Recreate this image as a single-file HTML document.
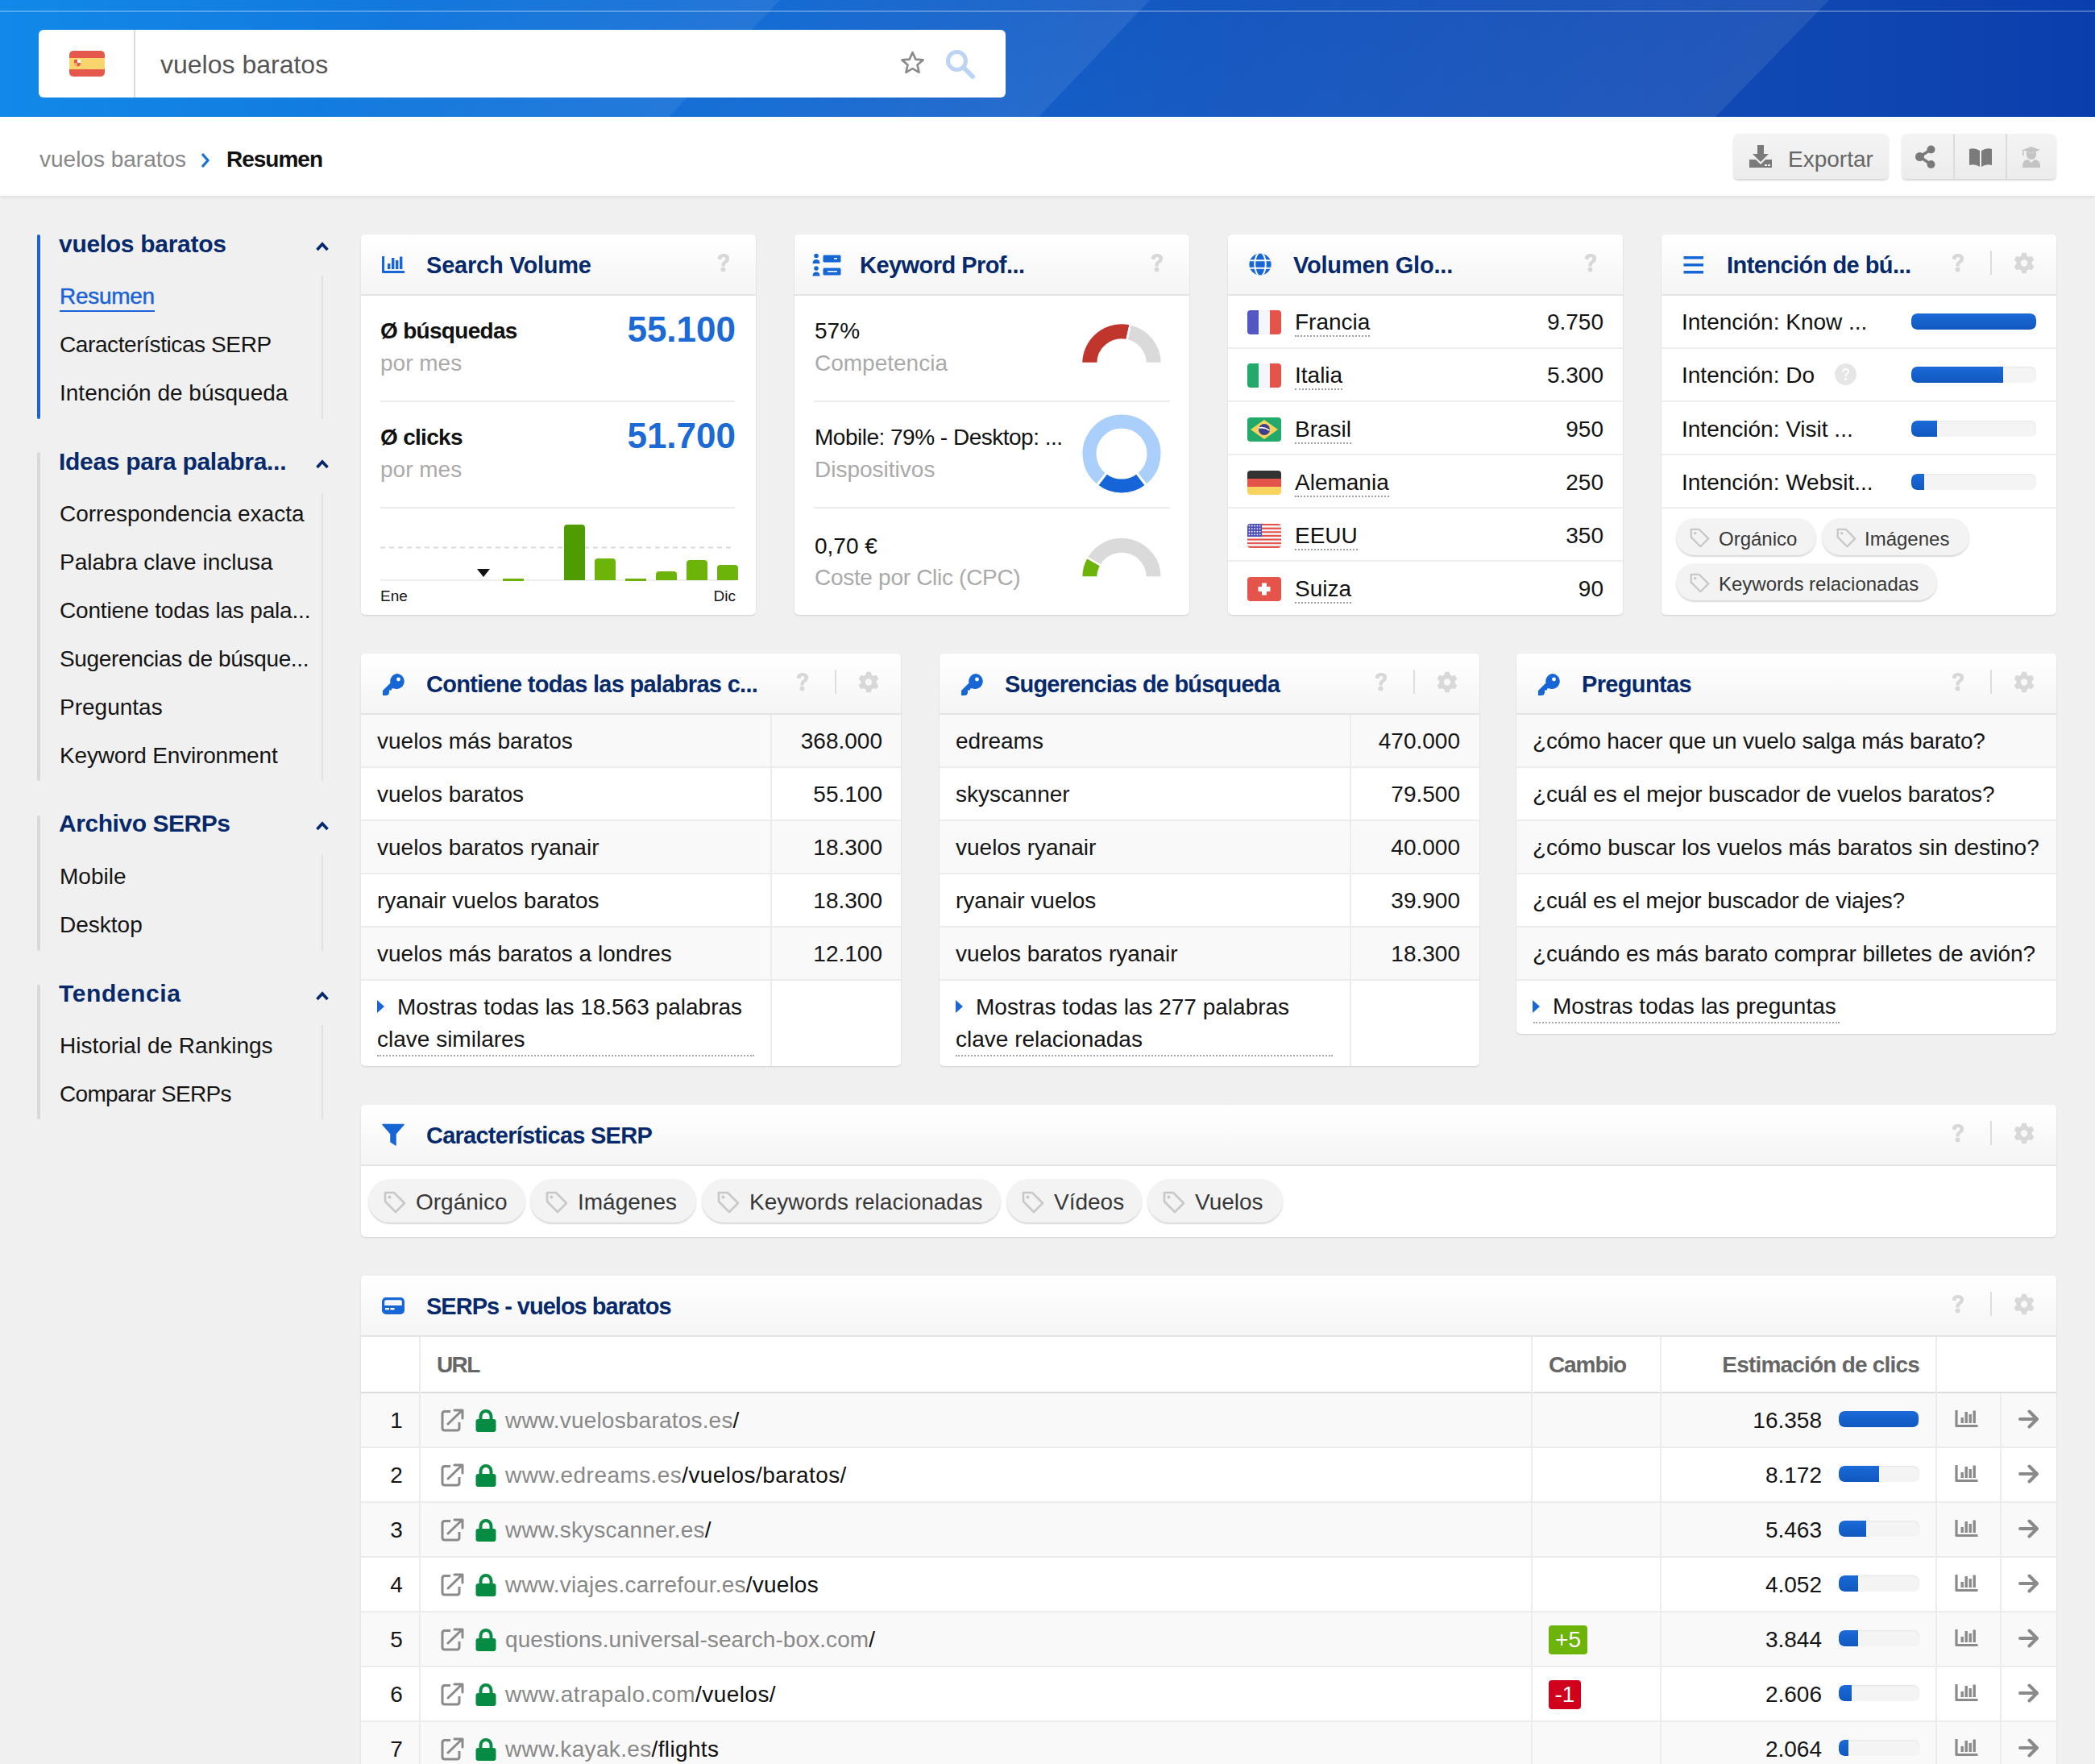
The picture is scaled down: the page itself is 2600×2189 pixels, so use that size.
<!DOCTYPE html><html><head><meta charset="utf-8"><style>
*{margin:0;padding:0;box-sizing:border-box}
html,body{width:2600px;height:2189px;overflow:hidden;background:#f0f0f0;font-family:"Liberation Sans", sans-serif;}
.t{position:absolute;white-space:nowrap}
.abs{position:absolute}
.card{position:absolute;background:#fff;border-radius:5px;box-shadow:0 1px 2px rgba(0,0,0,.13),0 0 1px rgba(0,0,0,.08);overflow:hidden}
.ch{position:absolute;left:0;top:0;right:0;height:76px;background:linear-gradient(#fff,#f5f5f5);border-bottom:2px solid #e4e4e4}
.pill{position:absolute;background:#f3f3f3;border-radius:30px;box-shadow:0 2px 2px rgba(0,0,0,.16)}
</style></head><body>
<div class="abs" style="left:0;top:0;width:2600px;height:145px;background:linear-gradient(90deg,#1189e9 0px,#1378dd 500px,#156cd4 950px,#1458c1 1450px,#0f46b1 2300px,#0b3ead 2600px);overflow:hidden">
<svg class="abs" style="left:0;top:0" width="2600" height="145">
<defs>
<linearGradient id="g1" gradientUnits="userSpaceOnUse" x1="520" y1="0" x2="744" y2="224"><stop offset="0" stop-color="#fff" stop-opacity="0"/><stop offset="1" stop-color="#fff" stop-opacity="0.07"/></linearGradient>
<linearGradient id="g2" gradientUnits="userSpaceOnUse" x1="968" y1="0" x2="1197" y2="229"><stop offset="0" stop-color="#fff" stop-opacity="0"/><stop offset="1" stop-color="#fff" stop-opacity="0.08"/></linearGradient>
<linearGradient id="g3" gradientUnits="userSpaceOnUse" x1="1427" y1="0" x2="1848" y2="421"><stop offset="0" stop-color="#fff" stop-opacity="0"/><stop offset="1" stop-color="#fff" stop-opacity="0.085"/></linearGradient>
</defs>
<polygon points="0,0 968,0 830,145 0,145" fill="url(#g1)"/>
<polygon points="968,0 1427,0 1289,145 830,145" fill="url(#g2)"/>
<polygon points="1427,0 2270,0 2129,145 1289,145" fill="url(#g3)"/>
</svg>
<div class="abs" style="left:0;top:13px;width:2600px;height:2px;background:rgba(255,255,255,.28)"></div>
</div>
<div class="abs" style="left:48px;top:37px;width:1200px;height:84px;background:#fff;border-radius:6px"></div>
<div class="abs" style="left:166px;top:37px;width:2px;height:84px;background:#dcdcdc"></div>
<svg class="abs" style="left:86px;top:63px" width="44" height="32" viewBox="0 0 44 32">
<defs><clipPath id="fr"><rect width="44" height="32" rx="5"/></clipPath></defs>
<g clip-path="url(#fr)"><rect width="44" height="32" fill="#e5594c"/><rect y="9" width="44" height="14" fill="#fad46c"/>
<rect x="6" y="11" width="4" height="4" fill="#e5594c"/><rect x="10" y="11" width="4" height="4" fill="#fff"/>
<path d="M6 15h4v4.5c-2.5 0-4-1.5-4-4.5z" fill="#f0a460"/><path d="M10 15h4c0 3-1.5 4.5-4 4.5z" fill="#e5594c"/></g></svg>
<div class="t " style="left:199px;top:63.9px;font-size:32px;line-height:32px;color:#555;font-weight:normal;">vuelos baratos</div>
<svg class="abs" style="left:1116px;top:62px" width="33" height="32" viewBox="0 0 33 32"><path d="M16.5 3 L20.3 11.6 L29.6 12.4 L22.5 18.6 L24.6 27.8 L16.5 23 L8.4 27.8 L10.5 18.6 L3.4 12.4 L12.7 11.6 Z" fill="none" stroke="#8a8a8a" stroke-width="2.6" stroke-linejoin="round"/></svg>
<svg class="abs" style="left:1172px;top:60px" width="40" height="40" viewBox="0 0 40 40"><circle cx="15.5" cy="15.5" r="11" fill="none" stroke="#bcd3f4" stroke-width="5"/><line x1="24" y1="24" x2="35" y2="35" stroke="#bcd3f4" stroke-width="6" stroke-linecap="round"/></svg>
<div class="abs" style="left:0;top:145px;width:2600px;height:98px;background:#fff;box-shadow:0 2px 4px rgba(0,0,0,.07)"></div>
<div class="t " style="left:49px;top:184.3px;font-size:28px;line-height:28px;color:#888;font-weight:normal;">vuelos baratos</div>
<svg class="abs" style="left:248px;top:188px" width="14" height="22" viewBox="0 0 14 22"><path d="M3 3 L10 11 L3 19" fill="none" stroke="#1a74d2" stroke-width="3.2"/></svg>
<div class="t " style="left:281px;top:184.3px;font-size:28px;line-height:28px;color:#111;font-weight:bold;letter-spacing:-1px">Resumen</div>
<div class="abs" style="left:2151px;top:166px;width:193px;height:56px;border-radius:6px;background:linear-gradient(#f4f4f4,#ececec);box-shadow:0 2px 2px rgba(0,0,0,.16)"></div>
<svg class="abs" style="left:2170px;top:180px" width="32" height="30" viewBox="0 0 32 30"><rect x="11" y="0" width="8" height="12" fill="#7a7a7a"/><path d="M5 11 L25 11 L15 21 Z" fill="#7a7a7a"/><path d="M1 18 h8 l6 6 l6 -6 h8 v10 h-28 z" fill="#7a7a7a"/><rect x="20" y="24" width="3" height="2" fill="#f0f0f0"/><rect x="24" y="24" width="3" height="2" fill="#f0f0f0"/></svg>
<div class="t " style="left:2219px;top:184.3px;font-size:28px;line-height:28px;color:#666;font-weight:normal;">Exportar</div>
<div class="abs" style="left:2360px;top:166px;width:192px;height:56px;border-radius:6px;background:linear-gradient(#f4f4f4,#ececec);box-shadow:0 2px 2px rgba(0,0,0,.16)"></div>
<div class="abs" style="left:2424px;top:166px;width:2px;height:56px;background:#dcdcdc"></div>
<div class="abs" style="left:2489px;top:166px;width:2px;height:56px;background:#dcdcdc"></div>
<svg class="abs" style="left:2376px;top:180px" width="32" height="30" viewBox="0 0 32 30"><circle cx="20.5" cy="5.5" r="5" fill="#7a7a7a"/><circle cx="6.5" cy="14.5" r="5.5" fill="#7a7a7a"/><circle cx="20.5" cy="24" r="5" fill="#7a7a7a"/><path d="M6.5 14.5 L20.5 5.5 M6.5 14.5 L20.5 24" stroke="#7a7a7a" stroke-width="3.5"/></svg>
<svg class="abs" style="left:2443px;top:184px" width="30" height="24" viewBox="0 0 30 24"><path d="M1 1 Q8 -1 14 3 V23 Q8 19 1 21 Z" fill="#7a7a7a"/><path d="M29 1 Q22 -1 16 3 V23 Q22 19 29 21 Z" fill="#7a7a7a"/></svg>
<svg class="abs" style="left:2509px;top:182px" width="24" height="26" viewBox="0 0 24 26"><path d="M1 4 L12 0 L23 4 L12 8 Z" fill="#c4c4c4"/><rect x="1" y="4" width="1.6" height="7" fill="#c4c4c4"/><path d="M6 6 v4 a6 6 0 0 0 12 0 v-4 l-6 2.2 z" fill="#c4c4c4"/><path d="M1 26 v-3 q0 -6 7 -7 l4 4 l4 -4 q7 1 7 7 v3 z" fill="#c4c4c4"/></svg>
<div class="abs" style="left:46px;top:291px;width:4px;height:229px;border-radius:2px;background:#1a62d6"></div>
<div class="t " style="left:73px;top:287.6px;font-size:30px;line-height:30px;color:#06296b;font-weight:bold;letter-spacing:-0.3px">vuelos baratos</div>
<svg class="abs" style="left:391px;top:299px" width="18" height="13" viewBox="0 0 18 13"><path d="M2.5 11 L9 4 L15.5 11" fill="none" stroke="#06296b" stroke-width="3.6"/></svg>
<div class="abs" style="left:399px;top:342px;width:2px;height:178px;background:#e0e0e0"></div>
<div class="t " style="left:74px;top:354.3px;font-size:28px;line-height:28px;color:#1a62d8;font-weight:normal;-webkit-text-stroke:0.45px #1a62d8;letter-spacing:-0.3px">Resumen</div>
<div class="abs" style="left:74px;top:385px;width:118px;height:2px;background:#1a62d8"></div>
<div class="t " style="left:74px;top:414.3px;font-size:28px;line-height:28px;color:#151515;font-weight:normal;letter-spacing:-0.4px">Características SERP</div>
<div class="t " style="left:74px;top:474.3px;font-size:28px;line-height:28px;color:#151515;font-weight:normal;letter-spacing:0px">Intención de búsqueda</div>
<div class="abs" style="left:46px;top:561px;width:4px;height:408px;border-radius:2px;background:#d9d9d9"></div>
<div class="t " style="left:73px;top:557.6px;font-size:30px;line-height:30px;color:#06296b;font-weight:bold;letter-spacing:-0.3px">Ideas para palabra...</div>
<svg class="abs" style="left:391px;top:569px" width="18" height="13" viewBox="0 0 18 13"><path d="M2.5 11 L9 4 L15.5 11" fill="none" stroke="#06296b" stroke-width="3.6"/></svg>
<div class="abs" style="left:399px;top:612px;width:2px;height:357px;background:#e0e0e0"></div>
<div class="t " style="left:74px;top:624.3px;font-size:28px;line-height:28px;color:#151515;font-weight:normal;letter-spacing:0px">Correspondencia exacta</div>
<div class="t " style="left:74px;top:684.3px;font-size:28px;line-height:28px;color:#151515;font-weight:normal;letter-spacing:0px">Palabra clave inclusa</div>
<div class="t " style="left:74px;top:744.3px;font-size:28px;line-height:28px;color:#151515;font-weight:normal;letter-spacing:-0.18px">Contiene todas las pala...</div>
<div class="t " style="left:74px;top:804.3px;font-size:28px;line-height:28px;color:#151515;font-weight:normal;letter-spacing:-0.35px">Sugerencias de búsque...</div>
<div class="t " style="left:74px;top:864.3px;font-size:28px;line-height:28px;color:#151515;font-weight:normal;letter-spacing:0px">Preguntas</div>
<div class="t " style="left:74px;top:924.3px;font-size:28px;line-height:28px;color:#151515;font-weight:normal;letter-spacing:-0.18px">Keyword Environment</div>
<div class="abs" style="left:46px;top:1012px;width:4px;height:168px;border-radius:2px;background:#d9d9d9"></div>
<div class="t " style="left:73px;top:1006.6px;font-size:30px;line-height:30px;color:#06296b;font-weight:bold;letter-spacing:-0.45px">Archivo SERPs</div>
<svg class="abs" style="left:391px;top:1018px" width="18" height="13" viewBox="0 0 18 13"><path d="M2.5 11 L9 4 L15.5 11" fill="none" stroke="#06296b" stroke-width="3.6"/></svg>
<div class="abs" style="left:399px;top:1061px;width:2px;height:119px;background:#e0e0e0"></div>
<div class="t " style="left:74px;top:1074.3px;font-size:28px;line-height:28px;color:#151515;font-weight:normal;letter-spacing:0px">Mobile</div>
<div class="t " style="left:74px;top:1134.3px;font-size:28px;line-height:28px;color:#151515;font-weight:normal;letter-spacing:0px">Desktop</div>
<div class="abs" style="left:46px;top:1222px;width:4px;height:167px;border-radius:2px;background:#d9d9d9"></div>
<div class="t " style="left:73px;top:1217.6px;font-size:30px;line-height:30px;color:#06296b;font-weight:bold;letter-spacing:0.6px">Tendencia</div>
<svg class="abs" style="left:391px;top:1229px" width="18" height="13" viewBox="0 0 18 13"><path d="M2.5 11 L9 4 L15.5 11" fill="none" stroke="#06296b" stroke-width="3.6"/></svg>
<div class="abs" style="left:399px;top:1272px;width:2px;height:117px;background:#e0e0e0"></div>
<div class="t " style="left:74px;top:1284.3px;font-size:28px;line-height:28px;color:#151515;font-weight:normal;letter-spacing:0px">Historial de Rankings</div>
<div class="t " style="left:74px;top:1344.3px;font-size:28px;line-height:28px;color:#151515;font-weight:normal;letter-spacing:-0.7px">Comparar SERPs</div>
<div class="card" style="left:448px;top:291px;width:490px;height:472px"><div class="ch"></div></div>
<div class="card" style="left:986px;top:291px;width:490px;height:472px"><div class="ch"></div></div>
<div class="card" style="left:1524px;top:291px;width:490px;height:472px"><div class="ch"></div></div>
<div class="card" style="left:2062px;top:291px;width:490px;height:472px"><div class="ch"></div></div>
<svg class="abs" style="left:474px;top:318px" width="28" height="21" viewBox="0 0 28 21"><path d="M1.5 0 V19.5 H28" fill="none" stroke="#1766d6" stroke-width="3.2" stroke-linejoin="round"/><rect x="7" y="9" width="3.4" height="7" fill="#1766d6"/><rect x="12" y="2" width="3.4" height="14" fill="#1766d6"/><rect x="17" y="5" width="3.4" height="11" fill="#1766d6"/><rect x="22" y="0.5" width="3.4" height="15.5" fill="#1766d6"/></svg>

<div class="t " style="left:529px;top:314.5px;font-size:29px;line-height:29px;color:#06296b;font-weight:bold;letter-spacing:-0.2px">Search Volume</div>
<svg class="abs" style="left:889px;top:314px" width="18" height="24" viewBox="0 0 18 24"><path d="M2.5 7 Q2.5 1.5 9 1.5 Q15.5 1.5 15.5 7 Q15.5 10.5 11.5 12.5 Q10 13.5 10 16 H7 Q7 12 9.5 10.5 Q12 9 12 7 Q12 4.5 9 4.5 Q6 4.5 6 7.5 Z" fill="#d8d8d8" stroke="#d8d8d8" stroke-width="1.2"/><circle cx="8.5" cy="20.5" r="3" fill="#d8d8d8"/></svg>
<div class="t " style="left:472px;top:397.3px;font-size:28px;line-height:28px;color:#111;font-weight:bold;letter-spacing:-0.7px">Ø búsquedas</div>
<div class="t " style="left:472px;top:437.3px;font-size:28px;line-height:28px;color:#aaa;font-weight:normal;">por mes</div>
<div class="t " style="right:1687px;top:386.8px;font-size:44px;line-height:44px;color:#1b6ad6;font-weight:bold;">55.100</div>
<div class="abs" style="left:472px;top:497px;width:440px;height:2px;background:#ececec"></div>
<div class="t " style="left:472px;top:529.3px;font-size:28px;line-height:28px;color:#111;font-weight:bold;letter-spacing:-0.7px">Ø clicks</div>
<div class="t " style="left:472px;top:569.3px;font-size:28px;line-height:28px;color:#aaa;font-weight:normal;">por mes</div>
<div class="t " style="right:1687px;top:518.8px;font-size:44px;line-height:44px;color:#1b6ad6;font-weight:bold;">51.700</div>
<div class="abs" style="left:472px;top:629px;width:440px;height:2px;background:#ececec"></div>
<svg class="abs" style="left:472px;top:640px" width="450" height="90" viewBox="0 0 450 90"><line x1="0" y1="39.5" x2="440" y2="39.5" stroke="#d9d9d9" stroke-width="2" stroke-dasharray="6,5"/><rect x="0" y="79" width="440" height="2" fill="#eeeeee"/><rect x="152" y="78" width="26" height="3" fill="#6cb40a"/><path d="M228 80 V15 Q228 11 232 11 H250 Q254 11 254 15 V80 Z" fill="#4f9c02"/><path d="M266 80 V57 Q266 53 270 53 H288 Q292 53 292 57 V80 Z" fill="#6cb40a"/><rect x="304" y="78" width="26" height="3" fill="#6cb40a"/><path d="M342 80 V73 Q342 69 346 69 H364 Q368 69 368 73 V80 Z" fill="#6cb40a"/><path d="M380 80 V59 Q380 55 384 55 H402 Q406 55 406 59 V80 Z" fill="#6cb40a"/><path d="M418 80 V65 Q418 61 422 61 H440 Q444 61 444 65 V80 Z" fill="#6cb40a"/><path d="M120 66 L136 66 L128 76 Z" fill="#111"/></svg>
<div class="t " style="left:472px;top:729.9px;font-size:19px;line-height:19px;color:#151515;font-weight:normal;">Ene</div>
<div class="t " style="right:1687px;top:729.9px;font-size:19px;line-height:19px;color:#151515;font-weight:normal;">Dic</div>
<svg class="abs" style="left:1008px;top:314px" width="36" height="29" viewBox="0 0 36 29"><circle cx="5" cy="3.5" r="2.8" fill="#1766d6"/><path d="M0.5 13 Q0.5 8 5 8 Q9.5 8 9.5 13 Z" fill="#1766d6"/><circle cx="5" cy="19" r="2.8" fill="#1766d6"/><path d="M0.5 28.5 Q0.5 23.5 5 23.5 Q9.5 23.5 9.5 28.5 Z" fill="#1766d6"/><rect x="13.5" y="2.5" width="22" height="9" rx="1.5" fill="#1766d6"/><rect x="27" y="6" width="4" height="1.6" fill="#fff"/><rect x="13.5" y="18.5" width="22" height="9" rx="1.5" fill="#1766d6"/><rect x="19" y="22" width="12" height="1.6" fill="#fff"/></svg>

<div class="t " style="left:1067px;top:314.5px;font-size:29px;line-height:29px;color:#06296b;font-weight:bold;letter-spacing:-0.55px">Keyword Prof...</div>
<svg class="abs" style="left:1427px;top:314px" width="18" height="24" viewBox="0 0 18 24"><path d="M2.5 7 Q2.5 1.5 9 1.5 Q15.5 1.5 15.5 7 Q15.5 10.5 11.5 12.5 Q10 13.5 10 16 H7 Q7 12 9.5 10.5 Q12 9 12 7 Q12 4.5 9 4.5 Q6 4.5 6 7.5 Z" fill="#d8d8d8" stroke="#d8d8d8" stroke-width="1.2"/><circle cx="8.5" cy="20.5" r="3" fill="#d8d8d8"/></svg>
<div class="t " style="left:1011px;top:397.3px;font-size:28px;line-height:28px;color:#111;font-weight:normal;">57%</div>
<div class="t " style="left:1011px;top:437.3px;font-size:28px;line-height:28px;color:#aaa;font-weight:normal;">Competencia</div>
<div class="abs" style="left:1010px;top:497px;width:442px;height:2px;background:#ececec"></div>
<div class="t " style="left:1011px;top:529.3px;font-size:28px;line-height:28px;color:#111;font-weight:normal;letter-spacing:-0.5px">Mobile: 79% - Desktop: ...</div>
<div class="t " style="left:1011px;top:569.3px;font-size:28px;line-height:28px;color:#aaa;font-weight:normal;">Dispositivos</div>
<div class="abs" style="left:1010px;top:629px;width:442px;height:2px;background:#ececec"></div>
<div class="t " style="left:1011px;top:664.3px;font-size:28px;line-height:28px;color:#111;font-weight:normal;">0,70 €</div>
<div class="t " style="left:1011px;top:703.3px;font-size:28px;line-height:28px;color:#aaa;font-weight:normal;letter-spacing:-0.3px">Coste por Clic (CPC)</div>
<svg class="abs" style="left:1332px;top:390px" width="120" height="340" viewBox="1332 390 120 340"><path d="M1342.00 451.00 A50 50 0 0 1 1402.91 402.20 L1398.44 422.21 A29.5 29.5 0 0 0 1362.50 451.00 Z" fill="#c0362c" stroke="#fff" stroke-width="2.5"/><path d="M1402.91 402.20 A50 50 0 0 1 1442.00 451.00 L1421.50 451.00 A29.5 29.5 0 0 0 1398.44 422.21 Z" fill="#dadada" stroke="#fff" stroke-width="2.5"/><path d="M1422.65 602.51 A50 50 0 1 0 1361.35 602.51 L1373.61 586.70 A30 30 0 1 1 1410.39 586.70 Z" fill="#abcffb" stroke="#fff" stroke-width="3"/><path d="M1361.35 602.51 A50 50 0 0 0 1422.65 602.51 L1410.39 586.70 A30 30 0 0 1 1373.61 586.70 Z" fill="#1565d8" stroke="#fff" stroke-width="3"/><path d="M1342.00 716.50 A50 50 0 0 1 1348.70 691.50 L1366.45 701.75 A29.5 29.5 0 0 0 1362.50 716.50 Z" fill="#6cb40a" stroke="#fff" stroke-width="2.5"/><path d="M1348.70 691.50 A50 50 0 0 1 1442.00 716.50 L1421.50 716.50 A29.5 29.5 0 0 0 1366.45 701.75 Z" fill="#dadada" stroke="#fff" stroke-width="2.5"/></svg>
<svg class="abs" style="left:1550px;top:314px" width="28" height="28" viewBox="0 0 28 28"><defs><clipPath id="gc"><circle cx="14" cy="14" r="13.6"/></clipPath></defs><g clip-path="url(#gc)"><rect width="28" height="28" fill="#1766d6"/><path d="M0 9.2 H28 M0 18.8 H28" stroke="#fff" stroke-width="2"/><ellipse cx="14" cy="14" rx="6.8" ry="14.6" fill="none" stroke="#fff" stroke-width="2"/></g></svg>

<div class="t " style="left:1605px;top:314.5px;font-size:29px;line-height:29px;color:#06296b;font-weight:bold;letter-spacing:-0.2px">Volumen Glo...</div>
<svg class="abs" style="left:1965px;top:314px" width="18" height="24" viewBox="0 0 18 24"><path d="M2.5 7 Q2.5 1.5 9 1.5 Q15.5 1.5 15.5 7 Q15.5 10.5 11.5 12.5 Q10 13.5 10 16 H7 Q7 12 9.5 10.5 Q12 9 12 7 Q12 4.5 9 4.5 Q6 4.5 6 7.5 Z" fill="#d8d8d8" stroke="#d8d8d8" stroke-width="1.2"/><circle cx="8.5" cy="20.5" r="3" fill="#d8d8d8"/></svg>
<svg class="abs" style="left:1548px;top:385px" width="42" height="30" viewBox="0 0 42 30"><defs><clipPath id="f0"><rect width="42" height="30" rx="4"/></clipPath></defs><g clip-path="url(#f0)"><rect width="42" height="30" fill="#f3f6fb"/><rect width="14" height="30" fill="#5257c4"/><rect x="28" width="14" height="30" fill="#e5544b"/></g></svg>
<div class="t " style="left:1607px;top:386.3px;font-size:28px;line-height:28px;color:#111;font-weight:normal;border-bottom:2px dotted #a0a0a0;padding-bottom:2px">Francia</div>
<div class="t " style="right:610px;top:386.3px;font-size:28px;line-height:28px;color:#151515;font-weight:normal;">9.750</div>
<div class="abs" style="left:1524px;top:431px;width:490px;height:2px;background:#ededed"></div>
<svg class="abs" style="left:1548px;top:451px" width="42" height="30" viewBox="0 0 42 30"><defs><clipPath id="f1"><rect width="42" height="30" rx="4"/></clipPath></defs><g clip-path="url(#f1)"><rect width="42" height="30" fill="#f3f6fb"/><rect width="14" height="30" fill="#23a96a"/><rect x="28" width="14" height="30" fill="#e5544b"/></g></svg>
<div class="t " style="left:1607px;top:452.3px;font-size:28px;line-height:28px;color:#111;font-weight:normal;border-bottom:2px dotted #a0a0a0;padding-bottom:2px">Italia</div>
<div class="t " style="right:610px;top:452.3px;font-size:28px;line-height:28px;color:#151515;font-weight:normal;">5.300</div>
<div class="abs" style="left:1524px;top:497px;width:490px;height:2px;background:#ededed"></div>
<svg class="abs" style="left:1548px;top:518px" width="42" height="30" viewBox="0 0 42 30"><defs><clipPath id="f2"><rect width="42" height="30" rx="4"/></clipPath></defs><g clip-path="url(#f2)"><rect width="42" height="30" fill="#23a96a"/><path d="M21 3 L38 15 L21 27 L4 15 Z" fill="#f6d35b"/><circle cx="21" cy="15" r="7" fill="#3e3f8f"/><path d="M14.5 13 Q21 11.5 27.5 16" stroke="#fff" stroke-width="1.6" fill="none"/></g></svg>
<div class="t " style="left:1607px;top:519.3px;font-size:28px;line-height:28px;color:#111;font-weight:normal;border-bottom:2px dotted #a0a0a0;padding-bottom:2px">Brasil</div>
<div class="t " style="right:610px;top:519.3px;font-size:28px;line-height:28px;color:#151515;font-weight:normal;">950</div>
<div class="abs" style="left:1524px;top:563px;width:490px;height:2px;background:#ededed"></div>
<svg class="abs" style="left:1548px;top:584px" width="42" height="30" viewBox="0 0 42 30"><defs><clipPath id="f3"><rect width="42" height="30" rx="4"/></clipPath></defs><g clip-path="url(#f3)"><rect width="42" height="10" fill="#333"/><rect y="10" width="42" height="10" fill="#e5544b"/><rect y="20" width="42" height="10" fill="#f8d15e"/></g></svg>
<div class="t " style="left:1607px;top:585.3px;font-size:28px;line-height:28px;color:#111;font-weight:normal;border-bottom:2px dotted #a0a0a0;padding-bottom:2px">Alemania</div>
<div class="t " style="right:610px;top:585.3px;font-size:28px;line-height:28px;color:#151515;font-weight:normal;">250</div>
<div class="abs" style="left:1524px;top:629px;width:490px;height:2px;background:#ededed"></div>
<svg class="abs" style="left:1548px;top:650px" width="42" height="30" viewBox="0 0 42 30"><defs><clipPath id="f4"><rect width="42" height="30" rx="4"/></clipPath></defs><g clip-path="url(#f4)"><rect y="0.00" width="42" height="2.31" fill="#e5544b"/><rect y="2.31" width="42" height="2.31" fill="#f3f6fb"/><rect y="4.62" width="42" height="2.31" fill="#e5544b"/><rect y="6.92" width="42" height="2.31" fill="#f3f6fb"/><rect y="9.23" width="42" height="2.31" fill="#e5544b"/><rect y="11.54" width="42" height="2.31" fill="#f3f6fb"/><rect y="13.85" width="42" height="2.31" fill="#e5544b"/><rect y="16.15" width="42" height="2.31" fill="#f3f6fb"/><rect y="18.46" width="42" height="2.31" fill="#e5544b"/><rect y="20.77" width="42" height="2.31" fill="#f3f6fb"/><rect y="23.08" width="42" height="2.31" fill="#e5544b"/><rect y="25.38" width="42" height="2.31" fill="#f3f6fb"/><rect y="27.69" width="42" height="2.31" fill="#e5544b"/><rect width="18" height="16" fill="#4b4fb5"/><circle cx="2.5" cy="2.5" r="0.9" fill="#fff"/><circle cx="2.5" cy="6.1" r="0.9" fill="#fff"/><circle cx="2.5" cy="9.7" r="0.9" fill="#fff"/><circle cx="2.5" cy="13.3" r="0.9" fill="#fff"/><circle cx="5.8" cy="2.5" r="0.9" fill="#fff"/><circle cx="5.8" cy="6.1" r="0.9" fill="#fff"/><circle cx="5.8" cy="9.7" r="0.9" fill="#fff"/><circle cx="5.8" cy="13.3" r="0.9" fill="#fff"/><circle cx="9.1" cy="2.5" r="0.9" fill="#fff"/><circle cx="9.1" cy="6.1" r="0.9" fill="#fff"/><circle cx="9.1" cy="9.7" r="0.9" fill="#fff"/><circle cx="9.1" cy="13.3" r="0.9" fill="#fff"/><circle cx="12.4" cy="2.5" r="0.9" fill="#fff"/><circle cx="12.4" cy="6.1" r="0.9" fill="#fff"/><circle cx="12.4" cy="9.7" r="0.9" fill="#fff"/><circle cx="12.4" cy="13.3" r="0.9" fill="#fff"/><circle cx="15.7" cy="2.5" r="0.9" fill="#fff"/><circle cx="15.7" cy="6.1" r="0.9" fill="#fff"/><circle cx="15.7" cy="9.7" r="0.9" fill="#fff"/><circle cx="15.7" cy="13.3" r="0.9" fill="#fff"/></g></svg>
<div class="t " style="left:1607px;top:651.3px;font-size:28px;line-height:28px;color:#111;font-weight:normal;border-bottom:2px dotted #a0a0a0;padding-bottom:2px">EEUU</div>
<div class="t " style="right:610px;top:651.3px;font-size:28px;line-height:28px;color:#151515;font-weight:normal;">350</div>
<div class="abs" style="left:1524px;top:695px;width:490px;height:2px;background:#ededed"></div>
<svg class="abs" style="left:1548px;top:716px" width="42" height="30" viewBox="0 0 42 30"><defs><clipPath id="f5"><rect width="42" height="30" rx="4"/></clipPath></defs><g clip-path="url(#f5)"><rect width="42" height="30" fill="#e5544b"/><rect x="18" y="7.5" width="6" height="15" fill="#fff"/><rect x="13.5" y="12" width="15" height="6" fill="#fff"/></g></svg>
<div class="t " style="left:1607px;top:717.3px;font-size:28px;line-height:28px;color:#111;font-weight:normal;border-bottom:2px dotted #a0a0a0;padding-bottom:2px">Suiza</div>
<div class="t " style="right:610px;top:717.3px;font-size:28px;line-height:28px;color:#151515;font-weight:normal;">90</div>
<svg class="abs" style="left:2089px;top:318px" width="26" height="22" viewBox="0 0 26 22"><rect x="0.5" y="0" width="24.5" height="3.5" fill="#1766d6"/><rect x="0.5" y="9" width="24.5" height="3.5" fill="#1766d6"/><rect x="0.5" y="18" width="24.5" height="3.5" fill="#1766d6"/></svg>

<div class="t " style="left:2143px;top:314.5px;font-size:29px;line-height:29px;color:#06296b;font-weight:bold;letter-spacing:-0.55px">Intención de bú...</div>
<svg class="abs" style="left:2421px;top:314px" width="18" height="24" viewBox="0 0 18 24"><path d="M2.5 7 Q2.5 1.5 9 1.5 Q15.5 1.5 15.5 7 Q15.5 10.5 11.5 12.5 Q10 13.5 10 16 H7 Q7 12 9.5 10.5 Q12 9 12 7 Q12 4.5 9 4.5 Q6 4.5 6 7.5 Z" fill="#d8d8d8" stroke="#d8d8d8" stroke-width="1.2"/><circle cx="8.5" cy="20.5" r="3" fill="#d8d8d8"/></svg>
<div class="abs" style="left:2470px;top:311px;width:2px;height:30px;background:#dedede"></div>
<svg class="abs" style="left:2499px;top:313px" width="26" height="27" viewBox="0 0 26 27"><path d="M9.13 4.83 L10.42 0.76 L15.58 0.76 L16.87 4.83 L18.58 5.81 L22.74 4.89 L25.33 9.37 L22.45 12.52 L22.45 14.48 L25.33 17.63 L22.74 22.11 L18.58 21.19 L16.87 22.17 L15.58 26.24 L10.42 26.24 L9.13 22.17 L7.42 21.19 L3.26 22.11 L0.67 17.63 L3.55 14.48 L3.55 12.52 L0.67 9.37 L3.26 4.89 L7.42 5.81Z" fill="#d8d8d8"/><circle cx="13" cy="13.5" r="9.6" fill="#d8d8d8"/><circle cx="13" cy="13.5" r="4.2" fill="#f8f8f8"/></svg>
<div class="t " style="left:2087px;top:386.3px;font-size:28px;line-height:28px;color:#111;font-weight:normal;">Intención: Know ...</div>
<div class="abs" style="left:2372px;top:389px;width:155px;height:20px;border-radius:7px;background:#f4f4f4;box-shadow:inset 0 1px 2px rgba(0,0,0,.06);overflow:hidden"><div style="width:155px;height:20px;background:linear-gradient(#1a6ad8,#1158c0);border-radius:7px"></div></div>
<div class="abs" style="left:2062px;top:431px;width:490px;height:2px;background:#ededed"></div>
<div class="t " style="left:2087px;top:452.3px;font-size:28px;line-height:28px;color:#111;font-weight:normal;">Intención: Do</div>
<div class="abs" style="left:2372px;top:455px;width:155px;height:20px;border-radius:7px;background:#f4f4f4;box-shadow:inset 0 1px 2px rgba(0,0,0,.06);overflow:hidden"><div style="width:114px;height:20px;background:linear-gradient(#1a6ad8,#1158c0);border-radius:7px 0 0 7px"></div></div>
<div class="abs" style="left:2062px;top:497px;width:490px;height:2px;background:#ededed"></div>
<div class="t " style="left:2087px;top:519.3px;font-size:28px;line-height:28px;color:#111;font-weight:normal;">Intención: Visit ...</div>
<div class="abs" style="left:2372px;top:522px;width:155px;height:20px;border-radius:7px;background:#f4f4f4;box-shadow:inset 0 1px 2px rgba(0,0,0,.06);overflow:hidden"><div style="width:32px;height:20px;background:linear-gradient(#1a6ad8,#1158c0);border-radius:7px 0 0 7px"></div></div>
<div class="abs" style="left:2062px;top:563px;width:490px;height:2px;background:#ededed"></div>
<div class="t " style="left:2087px;top:585.3px;font-size:28px;line-height:28px;color:#111;font-weight:normal;">Intención: Websit...</div>
<div class="abs" style="left:2372px;top:588px;width:155px;height:20px;border-radius:7px;background:#f4f4f4;box-shadow:inset 0 1px 2px rgba(0,0,0,.06);overflow:hidden"><div style="width:16px;height:20px;background:linear-gradient(#1a6ad8,#1158c0);border-radius:7px 0 0 7px"></div></div>
<div class="abs" style="left:2062px;top:629px;width:490px;height:2px;background:#ededed"></div>
<svg class="abs" style="left:2277px;top:451px" width="27" height="27" viewBox="0 0 27 27"><circle cx="13.5" cy="13.5" r="13.5" fill="#e6e6e6"/><path d="M9 10.5 Q9 6 13.5 6 Q18 6 18 10 Q18 12.5 15 14 Q14.5 14.5 14.5 16 H12.5 Q12.5 13 14.5 12 Q16 11 16 10 Q16 8 13.5 8 Q11 8 11 10.5 Z" fill="#fff"/><circle cx="13.5" cy="19.5" r="1.6" fill="#fff"/></svg>
<div class="pill" style="left:2080px;top:643px;width:174px;height:46px;border-radius:23.0px"></div>
<svg class="abs" style="left:2097px;top:655px" width="25" height="25" viewBox="0 0 28 28"><path d="M2 2 H13 L26 15 L15 26 L2 13 Z" fill="none" stroke="#c8c8c8" stroke-width="2.6" stroke-linejoin="round"/><circle cx="7.5" cy="7.5" r="2" fill="#c8c8c8"/></svg>
<div class="t " style="left:2133px;top:656.7px;font-size:24px;line-height:24px;color:#383838;font-weight:normal;">Orgánico</div>
<div class="pill" style="left:2261px;top:643px;width:183px;height:46px;border-radius:23.0px"></div>
<svg class="abs" style="left:2279px;top:655px" width="25" height="25" viewBox="0 0 28 28"><path d="M2 2 H13 L26 15 L15 26 L2 13 Z" fill="none" stroke="#c8c8c8" stroke-width="2.6" stroke-linejoin="round"/><circle cx="7.5" cy="7.5" r="2" fill="#c8c8c8"/></svg>
<div class="t " style="left:2314px;top:656.7px;font-size:24px;line-height:24px;color:#383838;font-weight:normal;">Imágenes</div>
<div class="pill" style="left:2080px;top:699px;width:324px;height:46px;border-radius:23.0px"></div>
<svg class="abs" style="left:2097px;top:711px" width="25" height="25" viewBox="0 0 28 28"><path d="M2 2 H13 L26 15 L15 26 L2 13 Z" fill="none" stroke="#c8c8c8" stroke-width="2.6" stroke-linejoin="round"/><circle cx="7.5" cy="7.5" r="2" fill="#c8c8c8"/></svg>
<div class="t " style="left:2133px;top:712.7px;font-size:24px;line-height:24px;color:#383838;font-weight:normal;">Keywords relacionadas</div>
<div class="card" style="left:448px;top:811px;width:670px;height:512px"><div class="ch"></div></div>
<svg class="abs" style="left:474px;top:835px" width="29" height="29" viewBox="0 0 29 29"><path d="M18.5 1 A9.5 9.5 0 1 1 14 19 L13.5 19.5 L12 19.5 L12 21.5 L9 21.5 L9 24.5 Q8.5 28 5 28 H1 V22 L10.5 12.5 A9.5 9.5 0 0 1 18.5 1 Z" fill="#1766d6"/><circle cx="20.5" cy="8" r="2.4" fill="#fff"/></svg>

<div class="t " style="left:529px;top:834.5px;font-size:29px;line-height:29px;color:#06296b;font-weight:bold;letter-spacing:-0.7px">Contiene todas las palabras c...</div>
<svg class="abs" style="left:987px;top:834px" width="18" height="24" viewBox="0 0 18 24"><path d="M2.5 7 Q2.5 1.5 9 1.5 Q15.5 1.5 15.5 7 Q15.5 10.5 11.5 12.5 Q10 13.5 10 16 H7 Q7 12 9.5 10.5 Q12 9 12 7 Q12 4.5 9 4.5 Q6 4.5 6 7.5 Z" fill="#d8d8d8" stroke="#d8d8d8" stroke-width="1.2"/><circle cx="8.5" cy="20.5" r="3" fill="#d8d8d8"/></svg>
<div class="abs" style="left:1036px;top:831px;width:2px;height:30px;background:#dedede"></div>
<svg class="abs" style="left:1065px;top:833px" width="26" height="27" viewBox="0 0 26 27"><path d="M9.13 4.83 L10.42 0.76 L15.58 0.76 L16.87 4.83 L18.58 5.81 L22.74 4.89 L25.33 9.37 L22.45 12.52 L22.45 14.48 L25.33 17.63 L22.74 22.11 L18.58 21.19 L16.87 22.17 L15.58 26.24 L10.42 26.24 L9.13 22.17 L7.42 21.19 L3.26 22.11 L0.67 17.63 L3.55 14.48 L3.55 12.52 L0.67 9.37 L3.26 4.89 L7.42 5.81Z" fill="#d8d8d8"/><circle cx="13" cy="13.5" r="9.6" fill="#d8d8d8"/><circle cx="13" cy="13.5" r="4.2" fill="#f8f8f8"/></svg>
<div class="abs" style="left:448px;top:887px;width:670px;height:66px;background:#f9f9f9;border-bottom:2px solid #ececec"></div>
<div class="t " style="left:468px;top:906.3px;font-size:28px;line-height:28px;color:#151515;font-weight:normal;letter-spacing:0px">vuelos más baratos</div>
<div class="t " style="right:1505px;top:906.3px;font-size:28px;line-height:28px;color:#151515;font-weight:normal;">368.000</div>
<div class="abs" style="left:448px;top:953px;width:670px;height:66px;background:#fff;border-bottom:2px solid #ececec"></div>
<div class="t " style="left:468px;top:972.3px;font-size:28px;line-height:28px;color:#151515;font-weight:normal;letter-spacing:0px">vuelos baratos</div>
<div class="t " style="right:1505px;top:972.3px;font-size:28px;line-height:28px;color:#151515;font-weight:normal;">55.100</div>
<div class="abs" style="left:448px;top:1019px;width:670px;height:66px;background:#f9f9f9;border-bottom:2px solid #ececec"></div>
<div class="t " style="left:468px;top:1038.3px;font-size:28px;line-height:28px;color:#151515;font-weight:normal;letter-spacing:0px">vuelos baratos ryanair</div>
<div class="t " style="right:1505px;top:1038.3px;font-size:28px;line-height:28px;color:#151515;font-weight:normal;">18.300</div>
<div class="abs" style="left:448px;top:1085px;width:670px;height:66px;background:#fff;border-bottom:2px solid #ececec"></div>
<div class="t " style="left:468px;top:1104.3px;font-size:28px;line-height:28px;color:#151515;font-weight:normal;letter-spacing:0px">ryanair vuelos baratos</div>
<div class="t " style="right:1505px;top:1104.3px;font-size:28px;line-height:28px;color:#151515;font-weight:normal;">18.300</div>
<div class="abs" style="left:448px;top:1151px;width:670px;height:66px;background:#f9f9f9;border-bottom:2px solid #ececec"></div>
<div class="t " style="left:468px;top:1170.3px;font-size:28px;line-height:28px;color:#151515;font-weight:normal;letter-spacing:0px">vuelos más baratos a londres</div>
<div class="t " style="right:1505px;top:1170.3px;font-size:28px;line-height:28px;color:#151515;font-weight:normal;">12.100</div>
<div class="abs" style="left:956px;top:887px;width:2px;height:436px;background:#ececec"></div>
<svg class="abs" style="left:468px;top:1241px" width="10" height="16" viewBox="0 0 10 16"><path d="M0 0 L9 8 L0 16 Z" fill="#1a66d4"/></svg>
<div class="t " style="left:493px;top:1236.3px;font-size:28px;line-height:28px;color:#151515;font-weight:normal;">Mostras todas las 18.563 palabras</div>
<div class="t " style="left:468px;top:1276.3px;font-size:28px;line-height:28px;color:#151515;font-weight:normal;">clave similares</div>
<div class="abs" style="left:468px;top:1309px;width:468px;height:0;border-top:2px dotted #a8a8a8"></div>
<div class="card" style="left:1166px;top:811px;width:670px;height:512px"><div class="ch"></div></div>
<svg class="abs" style="left:1192px;top:835px" width="29" height="29" viewBox="0 0 29 29"><path d="M18.5 1 A9.5 9.5 0 1 1 14 19 L13.5 19.5 L12 19.5 L12 21.5 L9 21.5 L9 24.5 Q8.5 28 5 28 H1 V22 L10.5 12.5 A9.5 9.5 0 0 1 18.5 1 Z" fill="#1766d6"/><circle cx="20.5" cy="8" r="2.4" fill="#fff"/></svg>

<div class="t " style="left:1247px;top:834.5px;font-size:29px;line-height:29px;color:#06296b;font-weight:bold;letter-spacing:-0.8px">Sugerencias de búsqueda</div>
<svg class="abs" style="left:1705px;top:834px" width="18" height="24" viewBox="0 0 18 24"><path d="M2.5 7 Q2.5 1.5 9 1.5 Q15.5 1.5 15.5 7 Q15.5 10.5 11.5 12.5 Q10 13.5 10 16 H7 Q7 12 9.5 10.5 Q12 9 12 7 Q12 4.5 9 4.5 Q6 4.5 6 7.5 Z" fill="#d8d8d8" stroke="#d8d8d8" stroke-width="1.2"/><circle cx="8.5" cy="20.5" r="3" fill="#d8d8d8"/></svg>
<div class="abs" style="left:1754px;top:831px;width:2px;height:30px;background:#dedede"></div>
<svg class="abs" style="left:1783px;top:833px" width="26" height="27" viewBox="0 0 26 27"><path d="M9.13 4.83 L10.42 0.76 L15.58 0.76 L16.87 4.83 L18.58 5.81 L22.74 4.89 L25.33 9.37 L22.45 12.52 L22.45 14.48 L25.33 17.63 L22.74 22.11 L18.58 21.19 L16.87 22.17 L15.58 26.24 L10.42 26.24 L9.13 22.17 L7.42 21.19 L3.26 22.11 L0.67 17.63 L3.55 14.48 L3.55 12.52 L0.67 9.37 L3.26 4.89 L7.42 5.81Z" fill="#d8d8d8"/><circle cx="13" cy="13.5" r="9.6" fill="#d8d8d8"/><circle cx="13" cy="13.5" r="4.2" fill="#f8f8f8"/></svg>
<div class="abs" style="left:1166px;top:887px;width:670px;height:66px;background:#f9f9f9;border-bottom:2px solid #ececec"></div>
<div class="t " style="left:1186px;top:906.3px;font-size:28px;line-height:28px;color:#151515;font-weight:normal;letter-spacing:0px">edreams</div>
<div class="t " style="right:788px;top:906.3px;font-size:28px;line-height:28px;color:#151515;font-weight:normal;">470.000</div>
<div class="abs" style="left:1166px;top:953px;width:670px;height:66px;background:#fff;border-bottom:2px solid #ececec"></div>
<div class="t " style="left:1186px;top:972.3px;font-size:28px;line-height:28px;color:#151515;font-weight:normal;letter-spacing:0px">skyscanner</div>
<div class="t " style="right:788px;top:972.3px;font-size:28px;line-height:28px;color:#151515;font-weight:normal;">79.500</div>
<div class="abs" style="left:1166px;top:1019px;width:670px;height:66px;background:#f9f9f9;border-bottom:2px solid #ececec"></div>
<div class="t " style="left:1186px;top:1038.3px;font-size:28px;line-height:28px;color:#151515;font-weight:normal;letter-spacing:0px">vuelos ryanair</div>
<div class="t " style="right:788px;top:1038.3px;font-size:28px;line-height:28px;color:#151515;font-weight:normal;">40.000</div>
<div class="abs" style="left:1166px;top:1085px;width:670px;height:66px;background:#fff;border-bottom:2px solid #ececec"></div>
<div class="t " style="left:1186px;top:1104.3px;font-size:28px;line-height:28px;color:#151515;font-weight:normal;letter-spacing:0px">ryanair vuelos</div>
<div class="t " style="right:788px;top:1104.3px;font-size:28px;line-height:28px;color:#151515;font-weight:normal;">39.900</div>
<div class="abs" style="left:1166px;top:1151px;width:670px;height:66px;background:#f9f9f9;border-bottom:2px solid #ececec"></div>
<div class="t " style="left:1186px;top:1170.3px;font-size:28px;line-height:28px;color:#151515;font-weight:normal;letter-spacing:0px">vuelos baratos ryanair</div>
<div class="t " style="right:788px;top:1170.3px;font-size:28px;line-height:28px;color:#151515;font-weight:normal;">18.300</div>
<div class="abs" style="left:1675px;top:887px;width:2px;height:436px;background:#ececec"></div>
<svg class="abs" style="left:1186px;top:1241px" width="10" height="16" viewBox="0 0 10 16"><path d="M0 0 L9 8 L0 16 Z" fill="#1a66d4"/></svg>
<div class="t " style="left:1211px;top:1236.3px;font-size:28px;line-height:28px;color:#151515;font-weight:normal;">Mostras todas las 277 palabras</div>
<div class="t " style="left:1186px;top:1276.3px;font-size:28px;line-height:28px;color:#151515;font-weight:normal;">clave relacionadas</div>
<div class="abs" style="left:1186px;top:1309px;width:468px;height:0;border-top:2px dotted #a8a8a8"></div>
<div class="card" style="left:1882px;top:811px;width:670px;height:472px"><div class="ch"></div></div>
<svg class="abs" style="left:1908px;top:835px" width="29" height="29" viewBox="0 0 29 29"><path d="M18.5 1 A9.5 9.5 0 1 1 14 19 L13.5 19.5 L12 19.5 L12 21.5 L9 21.5 L9 24.5 Q8.5 28 5 28 H1 V22 L10.5 12.5 A9.5 9.5 0 0 1 18.5 1 Z" fill="#1766d6"/><circle cx="20.5" cy="8" r="2.4" fill="#fff"/></svg>

<div class="t " style="left:1963px;top:834.5px;font-size:29px;line-height:29px;color:#06296b;font-weight:bold;letter-spacing:-0.65px">Preguntas</div>
<svg class="abs" style="left:2421px;top:834px" width="18" height="24" viewBox="0 0 18 24"><path d="M2.5 7 Q2.5 1.5 9 1.5 Q15.5 1.5 15.5 7 Q15.5 10.5 11.5 12.5 Q10 13.5 10 16 H7 Q7 12 9.5 10.5 Q12 9 12 7 Q12 4.5 9 4.5 Q6 4.5 6 7.5 Z" fill="#d8d8d8" stroke="#d8d8d8" stroke-width="1.2"/><circle cx="8.5" cy="20.5" r="3" fill="#d8d8d8"/></svg>
<div class="abs" style="left:2470px;top:831px;width:2px;height:30px;background:#dedede"></div>
<svg class="abs" style="left:2499px;top:833px" width="26" height="27" viewBox="0 0 26 27"><path d="M9.13 4.83 L10.42 0.76 L15.58 0.76 L16.87 4.83 L18.58 5.81 L22.74 4.89 L25.33 9.37 L22.45 12.52 L22.45 14.48 L25.33 17.63 L22.74 22.11 L18.58 21.19 L16.87 22.17 L15.58 26.24 L10.42 26.24 L9.13 22.17 L7.42 21.19 L3.26 22.11 L0.67 17.63 L3.55 14.48 L3.55 12.52 L0.67 9.37 L3.26 4.89 L7.42 5.81Z" fill="#d8d8d8"/><circle cx="13" cy="13.5" r="9.6" fill="#d8d8d8"/><circle cx="13" cy="13.5" r="4.2" fill="#f8f8f8"/></svg>
<div class="abs" style="left:1882px;top:887px;width:670px;height:66px;background:#f9f9f9;border-bottom:2px solid #ececec"></div>
<div class="t " style="left:1902px;top:906.3px;font-size:28px;line-height:28px;color:#151515;font-weight:normal;letter-spacing:-0.19px">¿cómo hacer que un vuelo salga más barato?</div>
<div class="abs" style="left:1882px;top:953px;width:670px;height:66px;background:#fff;border-bottom:2px solid #ececec"></div>
<div class="t " style="left:1902px;top:972.3px;font-size:28px;line-height:28px;color:#151515;font-weight:normal;letter-spacing:-0.16px">¿cuál es el mejor buscador de vuelos baratos?</div>
<div class="abs" style="left:1882px;top:1019px;width:670px;height:66px;background:#f9f9f9;border-bottom:2px solid #ececec"></div>
<div class="t " style="left:1902px;top:1038.3px;font-size:28px;line-height:28px;color:#151515;font-weight:normal;letter-spacing:0px">¿cómo buscar los vuelos más baratos sin destino?</div>
<div class="abs" style="left:1882px;top:1085px;width:670px;height:66px;background:#fff;border-bottom:2px solid #ececec"></div>
<div class="t " style="left:1902px;top:1104.3px;font-size:28px;line-height:28px;color:#151515;font-weight:normal;letter-spacing:-0.22px">¿cuál es el mejor buscador de viajes?</div>
<div class="abs" style="left:1882px;top:1151px;width:670px;height:66px;background:#f9f9f9;border-bottom:2px solid #ececec"></div>
<div class="t " style="left:1902px;top:1170.3px;font-size:28px;line-height:28px;color:#151515;font-weight:normal;letter-spacing:-0.1px">¿cuándo es más barato comprar billetes de avión?</div>
<svg class="abs" style="left:1902px;top:1241px" width="10" height="16" viewBox="0 0 10 16"><path d="M0 0 L9 8 L0 16 Z" fill="#1a66d4"/></svg>
<div class="t " style="left:1927px;top:1235.3px;font-size:28px;line-height:28px;color:#151515;font-weight:normal;">Mostras todas las preguntas</div>
<div class="abs" style="left:1903px;top:1268px;width:380px;height:0;border-top:2px dotted #a8a8a8"></div>
<div class="card" style="left:448px;top:1371px;width:2104px;height:164px"><div class="ch"></div></div>
<svg class="abs" style="left:474px;top:1394px" width="28" height="28" viewBox="0 0 28 28"><path d="M1 1.5 H27 L17 13 V27 L11 23 V13 Z" fill="#1766d6" stroke="#1766d6" stroke-width="1.5" stroke-linejoin="round"/></svg>

<div class="t " style="left:529px;top:1394.5px;font-size:29px;line-height:29px;color:#06296b;font-weight:bold;letter-spacing:-0.75px">Características SERP</div>
<svg class="abs" style="left:2421px;top:1394px" width="18" height="24" viewBox="0 0 18 24"><path d="M2.5 7 Q2.5 1.5 9 1.5 Q15.5 1.5 15.5 7 Q15.5 10.5 11.5 12.5 Q10 13.5 10 16 H7 Q7 12 9.5 10.5 Q12 9 12 7 Q12 4.5 9 4.5 Q6 4.5 6 7.5 Z" fill="#d8d8d8" stroke="#d8d8d8" stroke-width="1.2"/><circle cx="8.5" cy="20.5" r="3" fill="#d8d8d8"/></svg>
<div class="abs" style="left:2470px;top:1391px;width:2px;height:30px;background:#dedede"></div>
<svg class="abs" style="left:2499px;top:1393px" width="26" height="27" viewBox="0 0 26 27"><path d="M9.13 4.83 L10.42 0.76 L15.58 0.76 L16.87 4.83 L18.58 5.81 L22.74 4.89 L25.33 9.37 L22.45 12.52 L22.45 14.48 L25.33 17.63 L22.74 22.11 L18.58 21.19 L16.87 22.17 L15.58 26.24 L10.42 26.24 L9.13 22.17 L7.42 21.19 L3.26 22.11 L0.67 17.63 L3.55 14.48 L3.55 12.52 L0.67 9.37 L3.26 4.89 L7.42 5.81Z" fill="#d8d8d8"/><circle cx="13" cy="13.5" r="9.6" fill="#d8d8d8"/><circle cx="13" cy="13.5" r="4.2" fill="#f8f8f8"/></svg>
<div class="pill" style="left:457px;top:1463px;width:195px;height:54px;border-radius:27.0px"></div>
<svg class="abs" style="left:476px;top:1478px" width="28" height="28" viewBox="0 0 28 28"><path d="M2 2 H13 L26 15 L15 26 L2 13 Z" fill="none" stroke="#c8c8c8" stroke-width="2.6" stroke-linejoin="round"/><circle cx="7.5" cy="7.5" r="2" fill="#c8c8c8"/></svg>
<div class="t " style="left:516px;top:1478.3px;font-size:28px;line-height:28px;color:#383838;font-weight:normal;">Orgánico</div>
<div class="pill" style="left:658px;top:1463px;width:206px;height:54px;border-radius:27.0px"></div>
<svg class="abs" style="left:677px;top:1478px" width="28" height="28" viewBox="0 0 28 28"><path d="M2 2 H13 L26 15 L15 26 L2 13 Z" fill="none" stroke="#c8c8c8" stroke-width="2.6" stroke-linejoin="round"/><circle cx="7.5" cy="7.5" r="2" fill="#c8c8c8"/></svg>
<div class="t " style="left:717px;top:1478.3px;font-size:28px;line-height:28px;color:#383838;font-weight:normal;">Imágenes</div>
<div class="pill" style="left:871px;top:1463px;width:371px;height:54px;border-radius:27.0px"></div>
<svg class="abs" style="left:890px;top:1478px" width="28" height="28" viewBox="0 0 28 28"><path d="M2 2 H13 L26 15 L15 26 L2 13 Z" fill="none" stroke="#c8c8c8" stroke-width="2.6" stroke-linejoin="round"/><circle cx="7.5" cy="7.5" r="2" fill="#c8c8c8"/></svg>
<div class="t " style="left:930px;top:1478.3px;font-size:28px;line-height:28px;color:#383838;font-weight:normal;">Keywords relacionadas</div>
<div class="pill" style="left:1249px;top:1463px;width:168px;height:54px;border-radius:27.0px"></div>
<svg class="abs" style="left:1268px;top:1478px" width="28" height="28" viewBox="0 0 28 28"><path d="M2 2 H13 L26 15 L15 26 L2 13 Z" fill="none" stroke="#c8c8c8" stroke-width="2.6" stroke-linejoin="round"/><circle cx="7.5" cy="7.5" r="2" fill="#c8c8c8"/></svg>
<div class="t " style="left:1308px;top:1478.3px;font-size:28px;line-height:28px;color:#383838;font-weight:normal;">Vídeos</div>
<div class="pill" style="left:1424px;top:1463px;width:168px;height:54px;border-radius:27.0px"></div>
<svg class="abs" style="left:1443px;top:1478px" width="28" height="28" viewBox="0 0 28 28"><path d="M2 2 H13 L26 15 L15 26 L2 13 Z" fill="none" stroke="#c8c8c8" stroke-width="2.6" stroke-linejoin="round"/><circle cx="7.5" cy="7.5" r="2" fill="#c8c8c8"/></svg>
<div class="t " style="left:1483px;top:1478.3px;font-size:28px;line-height:28px;color:#383838;font-weight:normal;">Vuelos</div>
<div class="card" style="left:448px;top:1583px;width:2104px;height:700px"><div class="ch"></div></div>
<svg class="abs" style="left:474px;top:1610px" width="28" height="21" viewBox="0 0 28 21"><rect x="1.6" y="1.6" width="24.8" height="17.8" rx="3.5" fill="none" stroke="#1766d6" stroke-width="3.2"/><rect x="1.6" y="10" width="24.8" height="9" rx="2" fill="#1766d6"/><rect x="4" y="13" width="5" height="2.4" fill="#fff"/><rect x="10.5" y="13" width="5" height="2.4" fill="#fff"/></svg>

<div class="t " style="left:529px;top:1606.5px;font-size:29px;line-height:29px;color:#06296b;font-weight:bold;letter-spacing:-1.0px">SERPs - vuelos baratos</div>
<svg class="abs" style="left:2421px;top:1606px" width="18" height="24" viewBox="0 0 18 24"><path d="M2.5 7 Q2.5 1.5 9 1.5 Q15.5 1.5 15.5 7 Q15.5 10.5 11.5 12.5 Q10 13.5 10 16 H7 Q7 12 9.5 10.5 Q12 9 12 7 Q12 4.5 9 4.5 Q6 4.5 6 7.5 Z" fill="#d8d8d8" stroke="#d8d8d8" stroke-width="1.2"/><circle cx="8.5" cy="20.5" r="3" fill="#d8d8d8"/></svg>
<div class="abs" style="left:2470px;top:1603px;width:2px;height:30px;background:#dedede"></div>
<svg class="abs" style="left:2499px;top:1605px" width="26" height="27" viewBox="0 0 26 27"><path d="M9.13 4.83 L10.42 0.76 L15.58 0.76 L16.87 4.83 L18.58 5.81 L22.74 4.89 L25.33 9.37 L22.45 12.52 L22.45 14.48 L25.33 17.63 L22.74 22.11 L18.58 21.19 L16.87 22.17 L15.58 26.24 L10.42 26.24 L9.13 22.17 L7.42 21.19 L3.26 22.11 L0.67 17.63 L3.55 14.48 L3.55 12.52 L0.67 9.37 L3.26 4.89 L7.42 5.81Z" fill="#d8d8d8"/><circle cx="13" cy="13.5" r="9.6" fill="#d8d8d8"/><circle cx="13" cy="13.5" r="4.2" fill="#f8f8f8"/></svg>
<div class="abs" style="left:448px;top:1659px;width:2104px;height:70px;background:#fff;border-bottom:2px solid #dcdcdc;box-shadow:0 2px 2px rgba(0,0,0,.06)"></div>
<div class="abs" style="left:520px;top:1659px;width:2px;height:530px;background:#ececec"></div>
<div class="abs" style="left:1900px;top:1659px;width:2px;height:530px;background:#ececec"></div>
<div class="abs" style="left:2060px;top:1659px;width:2px;height:530px;background:#ececec"></div>
<div class="abs" style="left:2402px;top:1659px;width:2px;height:530px;background:#ececec"></div>
<div class="abs" style="left:2482px;top:1729px;width:2px;height:460px;background:#ececec"></div>
<div class="t " style="left:542px;top:1680.3px;font-size:28px;line-height:28px;color:#666;font-weight:bold;letter-spacing:-1.6px">URL</div>
<div class="t " style="left:1922px;top:1680.3px;font-size:28px;line-height:28px;color:#666;font-weight:bold;letter-spacing:-1.1px">Cambio</div>
<div class="t " style="right:218px;top:1680.3px;font-size:28px;line-height:28px;color:#666;font-weight:bold;letter-spacing:-0.8px">Estimación de clics</div>
<div class="abs" style="left:448px;top:1729px;width:2104px;height:68px;background:#f9f9f9;border-bottom:2px solid #ececec"></div>
<div class="abs" style="left:520px;top:1729px;width:2px;height:68px;background:#ececec"></div>
<div class="abs" style="left:1900px;top:1729px;width:2px;height:68px;background:#ececec"></div>
<div class="abs" style="left:2060px;top:1729px;width:2px;height:68px;background:#ececec"></div>
<div class="abs" style="left:2402px;top:1729px;width:2px;height:68px;background:#ececec"></div>
<div class="abs" style="left:2482px;top:1729px;width:2px;height:68px;background:#ececec"></div>
<div class="t " style="left:492px;top:1749.3px;font-size:28px;line-height:28px;color:#151515;font-weight:normal;transform:translateX(-50%)">1</div>
<svg class="abs" style="left:547px;top:1748px" width="30" height="29" viewBox="0 0 30 29"><path d="M12 3.5 H5 Q2 3.5 2 6.5 V24 Q2 27 5 27 H20 Q23 27 23 24 V17" fill="none" stroke="#8a8a8a" stroke-width="3"/><path d="M9 19 L25 3.5 M17 2 H27 V12" fill="none" stroke="#8a8a8a" stroke-width="3" stroke-linecap="round" stroke-linejoin="round"/></svg>
<svg class="abs" style="left:590px;top:1749px" width="26" height="28" viewBox="0 0 26 28"><path d="M6.5 12 V8.5 A6.5 6.5 0 0 1 19.5 8.5 V12" fill="none" stroke="#068c42" stroke-width="4"/><rect x="0.5" y="12" width="25" height="16" rx="3" fill="#068c42"/></svg>
<div class="t " style="left:627px;top:1749.3px;font-size:28px;line-height:28px;color:#111;font-weight:normal;letter-spacing:0.2px"><span style="color:#888">www.vuelosbaratos.es</span>/</div>
<div class="t " style="right:339px;top:1749.3px;font-size:28px;line-height:28px;color:#151515;font-weight:normal;">16.358</div>
<div class="abs" style="left:2282px;top:1751px;width:100px;height:20px;border-radius:7px;background:#f4f4f4;box-shadow:inset 0 1px 2px rgba(0,0,0,.06);overflow:hidden"><div style="width:99px;height:20px;background:linear-gradient(#1a6ad8,#1158c0);border-radius:7px"></div></div>
<svg class="abs" style="left:2426px;top:1750px" width="29" height="21" viewBox="0 0 28 21"><path d="M1.5 0 V19.5 H28" fill="none" stroke="#8a8a8a" stroke-width="3.2" stroke-linejoin="round"/><rect x="7" y="9" width="3.4" height="7" fill="#8a8a8a"/><rect x="12" y="2" width="3.4" height="14" fill="#8a8a8a"/><rect x="17" y="5" width="3.4" height="11" fill="#8a8a8a"/><rect x="22" y="0.5" width="3.4" height="15.5" fill="#8a8a8a"/></svg>
<svg class="abs" style="left:2505px;top:1749px" width="26" height="24" viewBox="0 0 26 24"><path d="M2 12 H22 M13.5 2.5 L23 12 L13.5 21.5" fill="none" stroke="#8a8a8a" stroke-width="4" stroke-linecap="round" stroke-linejoin="round"/></svg>
<div class="abs" style="left:448px;top:1797px;width:2104px;height:68px;background:#fff;border-bottom:2px solid #ececec"></div>
<div class="abs" style="left:520px;top:1797px;width:2px;height:68px;background:#ececec"></div>
<div class="abs" style="left:1900px;top:1797px;width:2px;height:68px;background:#ececec"></div>
<div class="abs" style="left:2060px;top:1797px;width:2px;height:68px;background:#ececec"></div>
<div class="abs" style="left:2402px;top:1797px;width:2px;height:68px;background:#ececec"></div>
<div class="abs" style="left:2482px;top:1797px;width:2px;height:68px;background:#ececec"></div>
<div class="t " style="left:492px;top:1817.3px;font-size:28px;line-height:28px;color:#151515;font-weight:normal;transform:translateX(-50%)">2</div>
<svg class="abs" style="left:547px;top:1816px" width="30" height="29" viewBox="0 0 30 29"><path d="M12 3.5 H5 Q2 3.5 2 6.5 V24 Q2 27 5 27 H20 Q23 27 23 24 V17" fill="none" stroke="#8a8a8a" stroke-width="3"/><path d="M9 19 L25 3.5 M17 2 H27 V12" fill="none" stroke="#8a8a8a" stroke-width="3" stroke-linecap="round" stroke-linejoin="round"/></svg>
<svg class="abs" style="left:590px;top:1817px" width="26" height="28" viewBox="0 0 26 28"><path d="M6.5 12 V8.5 A6.5 6.5 0 0 1 19.5 8.5 V12" fill="none" stroke="#068c42" stroke-width="4"/><rect x="0.5" y="12" width="25" height="16" rx="3" fill="#068c42"/></svg>
<div class="t " style="left:627px;top:1817.3px;font-size:28px;line-height:28px;color:#111;font-weight:normal;letter-spacing:0.43px"><span style="color:#888">www.edreams.es</span>/vuelos/baratos/</div>
<div class="t " style="right:339px;top:1817.3px;font-size:28px;line-height:28px;color:#151515;font-weight:normal;">8.172</div>
<div class="abs" style="left:2282px;top:1819px;width:100px;height:20px;border-radius:7px;background:#f4f4f4;box-shadow:inset 0 1px 2px rgba(0,0,0,.06);overflow:hidden"><div style="width:50px;height:20px;background:linear-gradient(#1a6ad8,#1158c0);border-radius:7px 0 0 7px"></div></div>
<svg class="abs" style="left:2426px;top:1818px" width="29" height="21" viewBox="0 0 28 21"><path d="M1.5 0 V19.5 H28" fill="none" stroke="#8a8a8a" stroke-width="3.2" stroke-linejoin="round"/><rect x="7" y="9" width="3.4" height="7" fill="#8a8a8a"/><rect x="12" y="2" width="3.4" height="14" fill="#8a8a8a"/><rect x="17" y="5" width="3.4" height="11" fill="#8a8a8a"/><rect x="22" y="0.5" width="3.4" height="15.5" fill="#8a8a8a"/></svg>
<svg class="abs" style="left:2505px;top:1817px" width="26" height="24" viewBox="0 0 26 24"><path d="M2 12 H22 M13.5 2.5 L23 12 L13.5 21.5" fill="none" stroke="#8a8a8a" stroke-width="4" stroke-linecap="round" stroke-linejoin="round"/></svg>
<div class="abs" style="left:448px;top:1865px;width:2104px;height:68px;background:#f9f9f9;border-bottom:2px solid #ececec"></div>
<div class="abs" style="left:520px;top:1865px;width:2px;height:68px;background:#ececec"></div>
<div class="abs" style="left:1900px;top:1865px;width:2px;height:68px;background:#ececec"></div>
<div class="abs" style="left:2060px;top:1865px;width:2px;height:68px;background:#ececec"></div>
<div class="abs" style="left:2402px;top:1865px;width:2px;height:68px;background:#ececec"></div>
<div class="abs" style="left:2482px;top:1865px;width:2px;height:68px;background:#ececec"></div>
<div class="t " style="left:492px;top:1885.3px;font-size:28px;line-height:28px;color:#151515;font-weight:normal;transform:translateX(-50%)">3</div>
<svg class="abs" style="left:547px;top:1884px" width="30" height="29" viewBox="0 0 30 29"><path d="M12 3.5 H5 Q2 3.5 2 6.5 V24 Q2 27 5 27 H20 Q23 27 23 24 V17" fill="none" stroke="#8a8a8a" stroke-width="3"/><path d="M9 19 L25 3.5 M17 2 H27 V12" fill="none" stroke="#8a8a8a" stroke-width="3" stroke-linecap="round" stroke-linejoin="round"/></svg>
<svg class="abs" style="left:590px;top:1885px" width="26" height="28" viewBox="0 0 26 28"><path d="M6.5 12 V8.5 A6.5 6.5 0 0 1 19.5 8.5 V12" fill="none" stroke="#068c42" stroke-width="4"/><rect x="0.5" y="12" width="25" height="16" rx="3" fill="#068c42"/></svg>
<div class="t " style="left:627px;top:1885.3px;font-size:28px;line-height:28px;color:#111;font-weight:normal;letter-spacing:0.2px"><span style="color:#888">www.skyscanner.es</span>/</div>
<div class="t " style="right:339px;top:1885.3px;font-size:28px;line-height:28px;color:#151515;font-weight:normal;">5.463</div>
<div class="abs" style="left:2282px;top:1887px;width:100px;height:20px;border-radius:7px;background:#f4f4f4;box-shadow:inset 0 1px 2px rgba(0,0,0,.06);overflow:hidden"><div style="width:34px;height:20px;background:linear-gradient(#1a6ad8,#1158c0);border-radius:7px 0 0 7px"></div></div>
<svg class="abs" style="left:2426px;top:1886px" width="29" height="21" viewBox="0 0 28 21"><path d="M1.5 0 V19.5 H28" fill="none" stroke="#8a8a8a" stroke-width="3.2" stroke-linejoin="round"/><rect x="7" y="9" width="3.4" height="7" fill="#8a8a8a"/><rect x="12" y="2" width="3.4" height="14" fill="#8a8a8a"/><rect x="17" y="5" width="3.4" height="11" fill="#8a8a8a"/><rect x="22" y="0.5" width="3.4" height="15.5" fill="#8a8a8a"/></svg>
<svg class="abs" style="left:2505px;top:1885px" width="26" height="24" viewBox="0 0 26 24"><path d="M2 12 H22 M13.5 2.5 L23 12 L13.5 21.5" fill="none" stroke="#8a8a8a" stroke-width="4" stroke-linecap="round" stroke-linejoin="round"/></svg>
<div class="abs" style="left:448px;top:1933px;width:2104px;height:68px;background:#fff;border-bottom:2px solid #ececec"></div>
<div class="abs" style="left:520px;top:1933px;width:2px;height:68px;background:#ececec"></div>
<div class="abs" style="left:1900px;top:1933px;width:2px;height:68px;background:#ececec"></div>
<div class="abs" style="left:2060px;top:1933px;width:2px;height:68px;background:#ececec"></div>
<div class="abs" style="left:2402px;top:1933px;width:2px;height:68px;background:#ececec"></div>
<div class="abs" style="left:2482px;top:1933px;width:2px;height:68px;background:#ececec"></div>
<div class="t " style="left:492px;top:1953.3px;font-size:28px;line-height:28px;color:#151515;font-weight:normal;transform:translateX(-50%)">4</div>
<svg class="abs" style="left:547px;top:1952px" width="30" height="29" viewBox="0 0 30 29"><path d="M12 3.5 H5 Q2 3.5 2 6.5 V24 Q2 27 5 27 H20 Q23 27 23 24 V17" fill="none" stroke="#8a8a8a" stroke-width="3"/><path d="M9 19 L25 3.5 M17 2 H27 V12" fill="none" stroke="#8a8a8a" stroke-width="3" stroke-linecap="round" stroke-linejoin="round"/></svg>
<svg class="abs" style="left:590px;top:1953px" width="26" height="28" viewBox="0 0 26 28"><path d="M6.5 12 V8.5 A6.5 6.5 0 0 1 19.5 8.5 V12" fill="none" stroke="#068c42" stroke-width="4"/><rect x="0.5" y="12" width="25" height="16" rx="3" fill="#068c42"/></svg>
<div class="t " style="left:627px;top:1953.3px;font-size:28px;line-height:28px;color:#111;font-weight:normal;letter-spacing:0.2px"><span style="color:#888">www.viajes.carrefour.es</span>/vuelos</div>
<div class="t " style="right:339px;top:1953.3px;font-size:28px;line-height:28px;color:#151515;font-weight:normal;">4.052</div>
<div class="abs" style="left:2282px;top:1955px;width:100px;height:20px;border-radius:7px;background:#f4f4f4;box-shadow:inset 0 1px 2px rgba(0,0,0,.06);overflow:hidden"><div style="width:24px;height:20px;background:linear-gradient(#1a6ad8,#1158c0);border-radius:7px 0 0 7px"></div></div>
<svg class="abs" style="left:2426px;top:1954px" width="29" height="21" viewBox="0 0 28 21"><path d="M1.5 0 V19.5 H28" fill="none" stroke="#8a8a8a" stroke-width="3.2" stroke-linejoin="round"/><rect x="7" y="9" width="3.4" height="7" fill="#8a8a8a"/><rect x="12" y="2" width="3.4" height="14" fill="#8a8a8a"/><rect x="17" y="5" width="3.4" height="11" fill="#8a8a8a"/><rect x="22" y="0.5" width="3.4" height="15.5" fill="#8a8a8a"/></svg>
<svg class="abs" style="left:2505px;top:1953px" width="26" height="24" viewBox="0 0 26 24"><path d="M2 12 H22 M13.5 2.5 L23 12 L13.5 21.5" fill="none" stroke="#8a8a8a" stroke-width="4" stroke-linecap="round" stroke-linejoin="round"/></svg>
<div class="abs" style="left:448px;top:2001px;width:2104px;height:68px;background:#f9f9f9;border-bottom:2px solid #ececec"></div>
<div class="abs" style="left:520px;top:2001px;width:2px;height:68px;background:#ececec"></div>
<div class="abs" style="left:1900px;top:2001px;width:2px;height:68px;background:#ececec"></div>
<div class="abs" style="left:2060px;top:2001px;width:2px;height:68px;background:#ececec"></div>
<div class="abs" style="left:2402px;top:2001px;width:2px;height:68px;background:#ececec"></div>
<div class="abs" style="left:2482px;top:2001px;width:2px;height:68px;background:#ececec"></div>
<div class="t " style="left:492px;top:2021.3px;font-size:28px;line-height:28px;color:#151515;font-weight:normal;transform:translateX(-50%)">5</div>
<svg class="abs" style="left:547px;top:2020px" width="30" height="29" viewBox="0 0 30 29"><path d="M12 3.5 H5 Q2 3.5 2 6.5 V24 Q2 27 5 27 H20 Q23 27 23 24 V17" fill="none" stroke="#8a8a8a" stroke-width="3"/><path d="M9 19 L25 3.5 M17 2 H27 V12" fill="none" stroke="#8a8a8a" stroke-width="3" stroke-linecap="round" stroke-linejoin="round"/></svg>
<svg class="abs" style="left:590px;top:2021px" width="26" height="28" viewBox="0 0 26 28"><path d="M6.5 12 V8.5 A6.5 6.5 0 0 1 19.5 8.5 V12" fill="none" stroke="#068c42" stroke-width="4"/><rect x="0.5" y="12" width="25" height="16" rx="3" fill="#068c42"/></svg>
<div class="t " style="left:627px;top:2021.3px;font-size:28px;line-height:28px;color:#111;font-weight:normal;letter-spacing:0.09px"><span style="color:#888">questions.universal-search-box.com</span>/</div>
<div class="abs" style="left:1922px;top:2017px;width:48px;height:36px;border-radius:4px;background:#6cb40a"></div>
<div class="t " style="left:1946.0px;top:2021.3px;font-size:28px;line-height:28px;color:#fff;font-weight:normal;transform:translateX(-50%)">+5</div>
<div class="t " style="right:339px;top:2021.3px;font-size:28px;line-height:28px;color:#151515;font-weight:normal;">3.844</div>
<div class="abs" style="left:2282px;top:2023px;width:100px;height:20px;border-radius:7px;background:#f4f4f4;box-shadow:inset 0 1px 2px rgba(0,0,0,.06);overflow:hidden"><div style="width:24px;height:20px;background:linear-gradient(#1a6ad8,#1158c0);border-radius:7px 0 0 7px"></div></div>
<svg class="abs" style="left:2426px;top:2022px" width="29" height="21" viewBox="0 0 28 21"><path d="M1.5 0 V19.5 H28" fill="none" stroke="#8a8a8a" stroke-width="3.2" stroke-linejoin="round"/><rect x="7" y="9" width="3.4" height="7" fill="#8a8a8a"/><rect x="12" y="2" width="3.4" height="14" fill="#8a8a8a"/><rect x="17" y="5" width="3.4" height="11" fill="#8a8a8a"/><rect x="22" y="0.5" width="3.4" height="15.5" fill="#8a8a8a"/></svg>
<svg class="abs" style="left:2505px;top:2021px" width="26" height="24" viewBox="0 0 26 24"><path d="M2 12 H22 M13.5 2.5 L23 12 L13.5 21.5" fill="none" stroke="#8a8a8a" stroke-width="4" stroke-linecap="round" stroke-linejoin="round"/></svg>
<div class="abs" style="left:448px;top:2069px;width:2104px;height:68px;background:#fff;border-bottom:2px solid #ececec"></div>
<div class="abs" style="left:520px;top:2069px;width:2px;height:68px;background:#ececec"></div>
<div class="abs" style="left:1900px;top:2069px;width:2px;height:68px;background:#ececec"></div>
<div class="abs" style="left:2060px;top:2069px;width:2px;height:68px;background:#ececec"></div>
<div class="abs" style="left:2402px;top:2069px;width:2px;height:68px;background:#ececec"></div>
<div class="abs" style="left:2482px;top:2069px;width:2px;height:68px;background:#ececec"></div>
<div class="t " style="left:492px;top:2089.3px;font-size:28px;line-height:28px;color:#151515;font-weight:normal;transform:translateX(-50%)">6</div>
<svg class="abs" style="left:547px;top:2088px" width="30" height="29" viewBox="0 0 30 29"><path d="M12 3.5 H5 Q2 3.5 2 6.5 V24 Q2 27 5 27 H20 Q23 27 23 24 V17" fill="none" stroke="#8a8a8a" stroke-width="3"/><path d="M9 19 L25 3.5 M17 2 H27 V12" fill="none" stroke="#8a8a8a" stroke-width="3" stroke-linecap="round" stroke-linejoin="round"/></svg>
<svg class="abs" style="left:590px;top:2089px" width="26" height="28" viewBox="0 0 26 28"><path d="M6.5 12 V8.5 A6.5 6.5 0 0 1 19.5 8.5 V12" fill="none" stroke="#068c42" stroke-width="4"/><rect x="0.5" y="12" width="25" height="16" rx="3" fill="#068c42"/></svg>
<div class="t " style="left:627px;top:2089.3px;font-size:28px;line-height:28px;color:#111;font-weight:normal;letter-spacing:0.45px"><span style="color:#888">www.atrapalo.com</span>/vuelos/</div>
<div class="abs" style="left:1922px;top:2085px;width:40px;height:36px;border-radius:4px;background:#d0021b"></div>
<div class="t " style="left:1942.0px;top:2089.3px;font-size:28px;line-height:28px;color:#fff;font-weight:normal;transform:translateX(-50%)">-1</div>
<div class="t " style="right:339px;top:2089.3px;font-size:28px;line-height:28px;color:#151515;font-weight:normal;">2.606</div>
<div class="abs" style="left:2282px;top:2091px;width:100px;height:20px;border-radius:7px;background:#f4f4f4;box-shadow:inset 0 1px 2px rgba(0,0,0,.06);overflow:hidden"><div style="width:16px;height:20px;background:linear-gradient(#1a6ad8,#1158c0);border-radius:7px 0 0 7px"></div></div>
<svg class="abs" style="left:2426px;top:2090px" width="29" height="21" viewBox="0 0 28 21"><path d="M1.5 0 V19.5 H28" fill="none" stroke="#8a8a8a" stroke-width="3.2" stroke-linejoin="round"/><rect x="7" y="9" width="3.4" height="7" fill="#8a8a8a"/><rect x="12" y="2" width="3.4" height="14" fill="#8a8a8a"/><rect x="17" y="5" width="3.4" height="11" fill="#8a8a8a"/><rect x="22" y="0.5" width="3.4" height="15.5" fill="#8a8a8a"/></svg>
<svg class="abs" style="left:2505px;top:2089px" width="26" height="24" viewBox="0 0 26 24"><path d="M2 12 H22 M13.5 2.5 L23 12 L13.5 21.5" fill="none" stroke="#8a8a8a" stroke-width="4" stroke-linecap="round" stroke-linejoin="round"/></svg>
<div class="abs" style="left:448px;top:2137px;width:2104px;height:68px;background:#f9f9f9;border-bottom:2px solid #ececec"></div>
<div class="abs" style="left:520px;top:2137px;width:2px;height:68px;background:#ececec"></div>
<div class="abs" style="left:1900px;top:2137px;width:2px;height:68px;background:#ececec"></div>
<div class="abs" style="left:2060px;top:2137px;width:2px;height:68px;background:#ececec"></div>
<div class="abs" style="left:2402px;top:2137px;width:2px;height:68px;background:#ececec"></div>
<div class="abs" style="left:2482px;top:2137px;width:2px;height:68px;background:#ececec"></div>
<div class="t " style="left:492px;top:2157.3px;font-size:28px;line-height:28px;color:#151515;font-weight:normal;transform:translateX(-50%)">7</div>
<svg class="abs" style="left:547px;top:2156px" width="30" height="29" viewBox="0 0 30 29"><path d="M12 3.5 H5 Q2 3.5 2 6.5 V24 Q2 27 5 27 H20 Q23 27 23 24 V17" fill="none" stroke="#8a8a8a" stroke-width="3"/><path d="M9 19 L25 3.5 M17 2 H27 V12" fill="none" stroke="#8a8a8a" stroke-width="3" stroke-linecap="round" stroke-linejoin="round"/></svg>
<svg class="abs" style="left:590px;top:2157px" width="26" height="28" viewBox="0 0 26 28"><path d="M6.5 12 V8.5 A6.5 6.5 0 0 1 19.5 8.5 V12" fill="none" stroke="#068c42" stroke-width="4"/><rect x="0.5" y="12" width="25" height="16" rx="3" fill="#068c42"/></svg>
<div class="t " style="left:627px;top:2157.3px;font-size:28px;line-height:28px;color:#111;font-weight:normal;letter-spacing:0.35px"><span style="color:#888">www.kayak.es</span>/flights</div>
<div class="t " style="right:339px;top:2157.3px;font-size:28px;line-height:28px;color:#151515;font-weight:normal;">2.064</div>
<div class="abs" style="left:2282px;top:2159px;width:100px;height:20px;border-radius:7px;background:#f4f4f4;box-shadow:inset 0 1px 2px rgba(0,0,0,.06);overflow:hidden"><div style="width:12px;height:20px;background:linear-gradient(#1a6ad8,#1158c0);border-radius:7px 0 0 7px"></div></div>
<svg class="abs" style="left:2426px;top:2158px" width="29" height="21" viewBox="0 0 28 21"><path d="M1.5 0 V19.5 H28" fill="none" stroke="#8a8a8a" stroke-width="3.2" stroke-linejoin="round"/><rect x="7" y="9" width="3.4" height="7" fill="#8a8a8a"/><rect x="12" y="2" width="3.4" height="14" fill="#8a8a8a"/><rect x="17" y="5" width="3.4" height="11" fill="#8a8a8a"/><rect x="22" y="0.5" width="3.4" height="15.5" fill="#8a8a8a"/></svg>
<svg class="abs" style="left:2505px;top:2157px" width="26" height="24" viewBox="0 0 26 24"><path d="M2 12 H22 M13.5 2.5 L23 12 L13.5 21.5" fill="none" stroke="#8a8a8a" stroke-width="4" stroke-linecap="round" stroke-linejoin="round"/></svg>
</body></html>
